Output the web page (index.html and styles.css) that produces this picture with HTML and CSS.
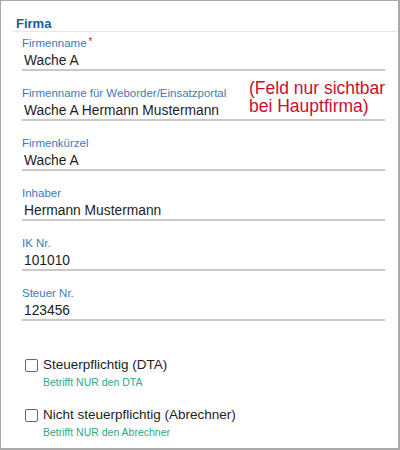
FILE: index.html
```html
<!DOCTYPE html>
<html lang="de">
<head>
    <meta charset="UTF-8">
    <title>Firma</title>
    <link rel="stylesheet" href="styles.css">
</head>
<body>
    <div class="frame">
        <h2 class="section-title">Firma</h2>
        <div class="fields">
            <div class="field">
                <label>Firmenname<span class="req">*</span></label>
                <div class="value">Wache A</div>
            </div>
            <div class="field">
                <label>Firmenname für Weborder/Einsatzportal</label>
                <div class="value">Wache A Hermann Mustermann</div>
                <div class="note">(Feld nur sichtbar<br>bei Hauptfirma)</div>
            </div>
            <div class="field">
                <label>Firmenkürzel</label>
                <div class="value">Wache A</div>
            </div>
            <div class="field">
                <label>Inhaber</label>
                <div class="value">Hermann Mustermann</div>
            </div>
            <div class="field">
                <label>IK Nr.</label>
                <div class="value">101010</div>
            </div>
            <div class="field">
                <label>Steuer Nr.</label>
                <div class="value">123456</div>
            </div>
        </div>

        <div class="checks">
            <div class="check">
                <span class="box"></span>
                <div>
                    <div class="check-label">Steuerpflichtig (DTA)</div>
                    <div class="hint">Betrifft NUR den DTA</div>
                </div>
            </div>
            <div class="check">
                <span class="box"></span>
                <div>
                    <div class="check-label">Nicht steuerpflichtig (Abrechner)</div>
                    <div class="hint">Betrifft NUR den Abrechner</div>
                </div>
            </div>
        </div>
    </div>
</body>
</html>
```

FILE: styles.css
```css
html, body { margin: 0; padding: 0; background: #fff; }
body { font-family: "Liberation Sans", Arial, sans-serif; color: #222; }
.frame { width: 400px; height: 450px; box-sizing: border-box; border: 1px solid #a9a9a9; border-right-width: 2px; border-bottom-width: 2px; overflow: hidden; }
.section-title { margin: 16px 0 0 11px; padding: 0 0 0 4px; font-size: 13px; font-weight: bold; color: #1c5aa3; border-bottom: 1px solid #e8e8e8; line-height: 14px; }
.fields { padding: 3px 13px 0 21px; }
.field { position: relative; border-bottom: 2px solid #c9c9c9; margin-bottom: 16px; }
.field label { display: block; font-size: 11.5px; line-height: 13px; color: #3b7bc0; }
.req { color: #c0262d; margin-left: 2px; font-size: 10px; vertical-align: 2px; }
.value { font-size: 13.8px; line-height: 16px; padding-left: 2px; margin-top: 3px; color: #1d1d1d; }
.note { position: absolute; left: 227px; top: -8px; white-space: nowrap; font-size: 17.5px; line-height: 18px; color: #c8102e; }
.checks { padding: 20px 0 0 24px; }
.check { display: flex; gap: 5px; margin-bottom: 19px; }
.box { width: 11px; height: 11px; border: 1px solid #666; border-radius: 2px; margin-top: 2px; flex: none; }
.check-label { font-size: 13.5px; line-height: 16px; color: #1d1d1d; }
.hint { font-size: 10.5px; line-height: 12px; color: #2ea886; margin-top: 3px; }
```
